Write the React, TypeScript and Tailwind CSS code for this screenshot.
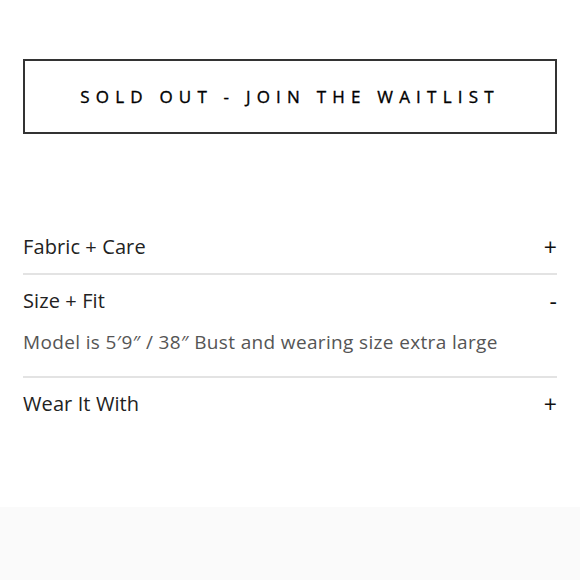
import React from "react";

const font = { fontFamily: '"Open Sans", "Liberation Sans", sans-serif' };

function Row({ title, sign, children }: { title: string; sign: string; children?: React.ReactNode }) {
  return (
    <div>
      <div className="flex h-[52px] items-center justify-between">
        <span className="text-[20px] tracking-[0.1px] text-[#222]">{title}</span>
        <span className="text-[23px] leading-none text-[#111]">{sign}</span>
      </div>
      {children}
    </div>
  );
}

export default function App() {
  return (
    <div className="w-[580px] h-[580px] bg-white flex flex-col" style={font}>
      <div className="px-[23px] pt-[59px]">
        <div className="h-[75px] border-2 border-[#333] flex items-center justify-center">
          <span className="text-[17px] font-medium tracking-[0.365em] text-[#000] [-webkit-text-stroke:0.35px_#000]">SOLD OUT - JOIN THE WAITLIST</span>
        </div>
        <div className="mt-[87px]">
          <Row title="Fabric + Care" sign="+" />
          <div className="h-[2px] bg-[#e3e3e3]" />
          <Row title="Size + Fit" sign="-">
            <p className="mt-[3px] pb-[22px] text-[19px] tracking-[0.35px] leading-[24px] text-[#555]">Model is 5′9″ / 38″ Bust and wearing size extra large</p>
          </Row>
          <div className="h-[2px] bg-[#e3e3e3]" />
          <Row title="Wear It With" sign="+" />
        </div>
      </div>
      <div className="mt-[77px] flex-1 bg-[#fafafa]" />
    </div>
  );
}
